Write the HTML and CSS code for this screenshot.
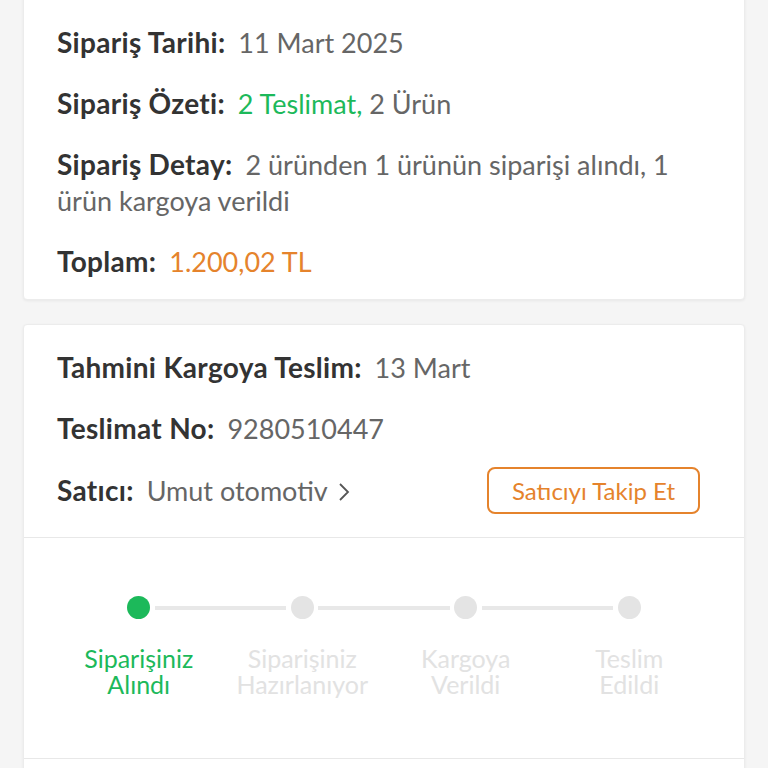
FILE: index.html
```html
<!DOCTYPE html>
<html lang="tr">
<head>
    <meta charset="UTF-8">
    <meta name="viewport" content="width=device-width, initial-scale=1.0">
    <title>Sipariş Detayı</title>
    <link rel="stylesheet" href="styles.css">
</head>
<body>
    <div class="page">
        <div class="card">
            <div class="row"><span class="label">Sipariş No:</span> <span class="value">417730952</span></div>
            <div class="row"><span class="label">Sipariş Tarihi:</span> <span class="value">11 Mart 2025</span></div>
            <div class="row"><span class="label">Sipariş Özeti:</span> <span class="value green">2 Teslimat,</span> <span class="value">2 Ürün</span></div>
            <div class="row"><span class="label">Sipariş Detay:</span> <span class="value">2 üründen 1 ürünün siparişi alındı, 1 ürün kargoya verildi</span></div>
            <div class="row"><span class="label">Toplam:</span> <span class="value orange">1.200,02 TL</span></div>
        </div>

        <div class="card">
            <div class="row"><span class="label">Tahmini Kargoya Teslim:</span> <span class="value">13 Mart</span></div>
            <div class="row"><span class="label">Teslimat No:</span> <span class="value">9280510447</span></div>
            <div class="row seller">
                <div>
                    <span class="label">Satıcı:</span> <span class="value">Umut otomotiv</span>
                    <svg class="chevron" width="12" height="20" viewBox="0 0 12 20"><path d="M2 2 L10 10 L2 18" fill="none" stroke="#555" stroke-width="1.8"/></svg>
                </div>
                <button class="follow">Satıcıyı Takip Et</button>
            </div>

            <div class="steps">
                <div class="step done">
                    <div class="dot"></div>
                    <div class="step-name">Siparişiniz<br>Alındı</div>
                </div>
                <div class="step">
                    <div class="dot"></div>
                    <div class="step-name">Siparişiniz<br>Hazırlanıyor</div>
                </div>
                <div class="step">
                    <div class="dot"></div>
                    <div class="step-name">Kargoya<br>Verildi</div>
                </div>
                <div class="step last">
                    <div class="dot"></div>
                    <div class="step-name">Teslim<br>Edildi</div>
                </div>
            </div>

            <div class="row more">&nbsp;</div>
        </div>
    </div>
</body>
</html>
```

FILE: styles.css
```css
:root {
    --green: #1cb95a;
    --orange: #e5832c;
    --label: #333333;
    --value: #666666;
    --line: #e8e8e8;
}

body {
    margin: 0;
    background-color: #f5f5f5;
    font-family: 'Lato', 'Noto Sans', sans-serif;
    font-size: 27px;
    color: var(--label);
}

.page {
    margin-top: -62px;
    padding: 0 23px;
}

.card {
    background-color: #ffffff;
    border-radius: 4px;
    border: 1px solid #ececec;
    box-shadow: 0 1px 3px rgba(0, 0, 0, 0.06);
    padding: 12px 33px 7px;
    margin-bottom: 24px;
}

.row {
    line-height: 36px;
    padding: 12px 0;
}

.label {
    font-size: 28px;
    font-weight: bold;
    letter-spacing: 0.3px;
    color: var(--label);
    margin-right: 6px;
}

.value {
    color: var(--value);
}

.value.green {
    color: var(--green);
}

.value.orange {
    color: var(--orange);
}

.seller {
    display: flex;
    justify-content: space-between;
    align-items: center;
    padding: 8px 44px 23px 33px;
    border-bottom: 1px solid var(--line);
    margin: 0 -33px;
}

.chevron {
    vertical-align: -1px;
    margin-left: 4px;
}

.follow {
    font-family: inherit;
    font-size: 24px;
    color: var(--orange);
    background: #ffffff;
    border: 2px solid var(--orange);
    border-radius: 8px;
    width: 213px;
    height: 47px;
    padding: 0;
}

.steps {
    display: grid;
    grid-template-columns: repeat(4, 1fr);
    padding: 58px 33px 61px;
    border-bottom: 1px solid var(--line);
    margin: 0 -33px;
}

.step {
    position: relative;
    display: flex;
    flex-direction: column;
    align-items: center;
}

.step::after {
    content: "";
    position: absolute;
    top: 10px;
    left: calc(50% + 16px);
    right: calc(-50% + 16px);
    height: 4px;
    background-color: var(--line);
}

.step.last::after {
    display: none;
}

.dot {
    width: 23px;
    height: 23px;
    border-radius: 50%;
    background-color: #e4e4e4;
}

.step.done .dot {
    background-color: var(--green);
}

.step-name {
    margin-top: 26px;
    font-size: 25px;
    line-height: 26px;
    text-align: center;
    color: #e2e2e2;
}

.step.done .step-name {
    color: var(--green);
}

.more {
    height: 40px;
}
```
